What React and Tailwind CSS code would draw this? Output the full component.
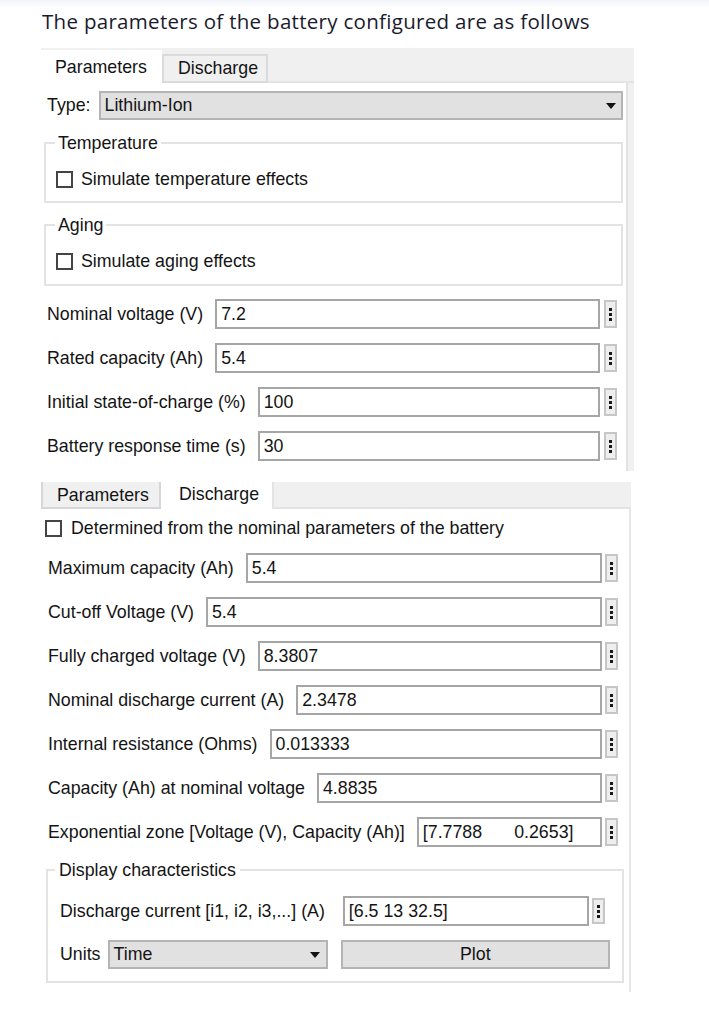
import React from "react";

const Dots = ({ h = "h-[28px]" }) => (
  <div
    className={`w-[13px] ${h} shrink-0 border-2 border-[#c6c6c6] bg-[#eeeeee] flex flex-col items-center justify-center gap-[2px]`}
  >
    <span className="w-[3px] h-[3px] bg-[#1a1a1a]" />
    <span className="w-[3px] h-[3px] bg-[#1a1a1a]" />
    <span className="w-[3px] h-[3px] bg-[#1a1a1a]" />
  </div>
);

const Arrow = () => (
  <svg width="10" height="6" viewBox="0 0 10 6" className="shrink-0">
    <polygon points="0,0 10,0 5,6" fill="#111" />
  </svg>
);

const Checkbox = () => (
  <span className="w-[17px] h-[17px] shrink-0 border-2 border-[#444] bg-white" />
);

const ParamRow = ({ label, value, gap = "gap-[4px]", pr = "pr-[6px]", pl = "pl-[3px]" }) => (
  <div className={`flex items-center h-[30px] ${pl} ${pr}`}>
    <span className="whitespace-nowrap">{label}</span>
    <div className={`flex-1 flex items-center ${gap} ml-[12px]`}>
      <div className="flex-1 h-[30px] border-2 border-[#a6a6a6] bg-white flex items-center px-[4px] whitespace-nowrap">
        {value}
      </div>
      <Dots />
    </div>
  </div>
);

const GroupBox = ({ title, children, className = "" }) => (
  <fieldset className={`border-2 border-[#e3e3e3] ${className}`}>
    <legend className="ml-[-1px] px-[3px] leading-[20px]">{title}</legend>
    {children}
  </fieldset>
);

export default function App() {
  const firstRows = [
    ["Nominal voltage (V)", "7.2"],
    ["Rated capacity (Ah)", "5.4"],
    ["Initial state-of-charge (%)", "100"],
    ["Battery response time (s)", "30"],
  ];

  const dischargeRows = [
    ["Maximum capacity (Ah)", "5.4"],
    ["Cut-off Voltage (V)", "5.4"],
    ["Fully charged voltage (V)", "8.3807"],
    ["Nominal discharge current (A)", "2.3478"],
    ["Internal resistance (Ohms)", "0.013333"],
    ["Capacity (Ah) at nominal voltage", "4.8835"],
  ];

  return (
    <div className="min-h-screen bg-white">
      <div className="h-[8px] bg-gradient-to-b from-[#f3f4fa] to-white" />
      <h1 className="pl-[42px] text-[20.5px] tracking-[0.3px] leading-[26px] text-[#1a1a2e] font-['Open_Sans',sans-serif]">
        The parameters of the battery configured are as follows
      </h1>

      <div className="pl-[41px] mt-[14px] text-[17.8px] text-[#141414] font-['Liberation_Sans',Arial,sans-serif]">
        {/* first block: Parameters tab */}
        <div className="w-[593px] bg-[#f0f0f0]">
          <div className="h-[35px] flex items-end">
            <div className="w-[121px] h-[33px] bg-white flex items-center pl-[14px] pt-[2px]">
              Parameters
            </div>
            <div className="w-[106px] h-[29px] border-2 border-[#dadada] flex items-center pl-[14px]">
              Discharge
            </div>
            <div className="flex-1 h-[2px] bg-[#e4e4e4]" />
          </div>

          <div className="mr-[6px] bg-white border-r-2 border-[#e2e2e2] pt-[8px] pb-[10px] pl-[3px] pr-[3px]">
            <div className="flex items-center h-[29px] pl-[3px]">
              <span>Type:</span>
              <div className="flex-1 ml-[8px] h-[29px] bg-[#e1e1e1] border-2 border-[#b4b4b4] flex items-center justify-between pl-[4px] pr-[5px]">
                <span>Lithium-Ion</span>
                <Arrow />
              </div>
            </div>

            <GroupBox title="Temperature" className="mt-[13px] pl-[10px] pt-[15px] pb-[11px]">
              <div className="flex items-center gap-[8px] h-[22px]">
                <Checkbox />
                <span>Simulate temperature effects</span>
              </div>
            </GroupBox>

            <GroupBox title="Aging" className="mt-[12px] pl-[10px] pt-[15px] pb-[12px]">
              <div className="flex items-center gap-[8px] h-[22px]">
                <Checkbox />
                <span>Simulate aging effects</span>
              </div>
            </GroupBox>

            <div className="mt-[13px] flex flex-col gap-[14px]">
              {firstRows.map(([label, value]) => (
                <ParamRow key={label} label={label} value={value} />
              ))}
            </div>
          </div>
        </div>

        {/* second block: Discharge tab */}
        <div className="w-[590px] mt-[11px]">
          <div className="h-[27px] flex bg-[#f0f0f0]">
            <div className="w-[120px] h-[27px] border-2 border-t-0 border-[#d6d6d6] flex items-center pl-[14px] pt-[1px]">
              Parameters
            </div>
            <div className="w-[111px] h-[27px] bg-white flex items-center pl-[18px] pb-[2px]">
              Discharge
            </div>
            <div className="flex-1 border-l-2 border-b-2 border-[#e4e4e4]" />
          </div>

          <div className="bg-white border-r-2 border-[#e6e6e6] pt-[8px] pb-[9px] pl-[4px] pr-[5px]">
            <div className="flex items-center gap-[9px] h-[22px]">
              <Checkbox />
              <span>Determined from the nominal parameters of the battery</span>
            </div>

            <div className="mt-[14px] flex flex-col gap-[14px]">
              {dischargeRows.map(([label, value]) => (
                <ParamRow key={label} label={label} value={value} gap="gap-[3px]" pl="pl-[3px]" pr="pr-[6px]" />
              ))}
              <ParamRow
                label="Exponential zone [Voltage (V), Capacity (Ah)]"
                value={
                  <span className="flex gap-[32px]">
                    <span>[7.7788</span>
                    <span>0.2653]</span>
                  </span>
                }
                gap="gap-[3px]"
                pl="pl-[3px]"
                pr="pr-[6px]"
              />
            </div>

            <fieldset className="mt-[13px] ml-[1px] border-2 border-[#e3e3e3] pl-[12px] pr-[12px] pt-[16px] pb-[12px]">
              <legend className="ml-[-5px] px-[4px] leading-[20px]">Display characteristics</legend>
              <div className="flex items-center h-[30px] pr-[5px]">
                <span className="whitespace-nowrap">Discharge current [i1, i2, i3,...] (A)</span>
                <div className="flex-1 flex items-center gap-[3px] ml-[18px]">
                  <div className="flex-1 h-[30px] border-2 border-[#a6a6a6] bg-white flex items-center px-[4px]">
                    [6.5 13 32.5]
                  </div>
                  <Dots h="h-[26px]" />
                </div>
              </div>
              <div className="mt-[14px] flex items-center h-[29px]">
                <span>Units</span>
                <div className="w-[220px] ml-[7px] h-[29px] bg-[#e1e1e1] border-2 border-[#b4b4b4] flex items-center justify-between pl-[4px] pr-[6px]">
                  <span>Time</span>
                  <Arrow />
                </div>
                <div className="flex-1 ml-[13px] h-[29px] bg-[#e1e1e1] border-2 border-[#b4b4b4] flex items-center justify-center">
                  Plot
                </div>
              </div>
            </fieldset>
          </div>
        </div>
      </div>
    </div>
  );
}
